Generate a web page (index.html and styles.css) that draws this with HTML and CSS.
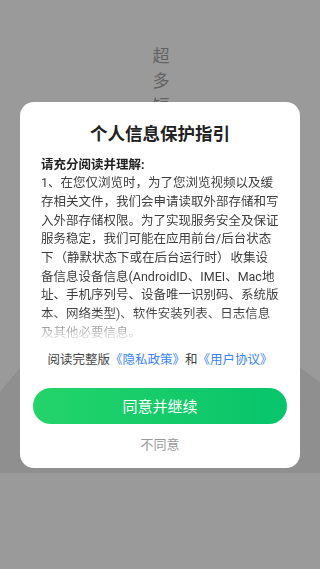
FILE: index.html
```html
<!doctype html>
<html lang="zh-CN">
<head>
	<meta charset="UTF-8">
	<meta name="viewport" content="width=device-width, initial-scale=1.0">
	<title>个人信息保护指引</title>
	<link rel="stylesheet" href="styles.css">
</head>
<body>
	<div class="page">
		<div class="hill"></div>
		<div class="slogan">超多短剧免费看</div>
	</div>

	<div class="mask">
		<div class="dialog">
			<h2 class="dialog-title">个人信息保护指引</h2>
			<div class="dialog-body">
				<p class="lead">请充分阅读并理解:</p>
				<p>1、在您仅浏览时，为了您浏览视频以及缓存相关文件，我们会申请读取外部存储和写入外部存储权限。为了实现服务安全及保证服务稳定，我们可能在应用前台/后台状态下<span class="paren">（静默状态下或在后台运行时）</span>收集设备信息设备信息(AndroidID、IMEI、Mac地址、手机序列号、设备唯一识别码、系统版本、网络类型)、软件安装列表、日志信息及其他必要信息。</p>
				<p>2、我们会根据您的授权，收集您的位置信息，用于为您推荐更合适的内容。</p>
			</div>
			<p class="links">阅读完整版<a href="#">《隐私政策》</a>和<a href="#">《用户协议》</a></p>
			<button class="btn-agree">同意并继续</button>
			<button class="btn-refuse">不同意</button>
		</div>
	</div>
</body>
</html>
```

FILE: styles.css
```css
* {
	margin: 0;
	padding: 0;
	box-sizing: border-box;
}
html, body {
	height: 100%;
}
body {
	font-family: Roboto, "Noto Sans CJK SC", sans-serif;
	background-color: #9a9a9a;
	overflow: hidden;
}

/* 底层页面（被遮罩盖住） */
.page {
	position: relative;
	height: 569px;
}
.hill {
	position: absolute;
	left: 0;
	top: 0;
	width: 100%;
	height: 473px;
	background-color: #8f8f8f;
	clip-path: polygon(0 392px, 126px 240px, 100% 382px, 100% 100%, 0 100%);
}
.slogan {
	position: absolute;
	left: 152px;
	top: 44px;
	width: 18px;
	font-size: 17px;
	line-height: 25px;
	color: #636363;
	text-align: center;
}

/* 弹窗 */
.mask {
	position: fixed;
	left: 0;
	top: 0;
	width: 100%;
	height: 100%;
	display: flex;
	align-items: center;
	justify-content: center;
}
.dialog {
	width: 280px;
	background-color: #fff;
	border-radius: 14px;
	padding: 19px 0 14px;
	display: flex;
	flex-direction: column;
	align-items: center;
}
.dialog-title {
	font-size: 17.5px;
	line-height: 26px;
	font-weight: bold;
	color: #222;
}
.dialog-body {
	width: 238px;
	height: 187px;
	margin-top: 9px;
	overflow: hidden;
	font-size: 12.5px;
	line-height: 18.7px;
	color: #3d3d3d;
	-webkit-mask-image: linear-gradient(to bottom, #000 calc(100% - 32px), transparent 100%);
	mask-image: linear-gradient(to bottom, #000 calc(100% - 32px), transparent 100%);
}
.lead {
	font-weight: bold;
	color: #222;
}
/* 全角括号在原图里略宽 */
.paren {
	padding: 0 1px;
}
.links {
	margin-top: 7px;
	font-size: 12.5px;
	line-height: 19px;
	color: #444;
}
.links a {
	color: #3a82f6;
	text-decoration: none;
}
.btn-agree {
	margin-top: 19px;
	width: 254px;
	height: 36px;
	border: none;
	border-radius: 18px;
	background: linear-gradient(to right, #24d469, #07c46b);
	color: #fff;
	font-family: inherit;
	font-size: 15px;
}
.btn-refuse {
	margin-top: 11px;
	border: none;
	background: none;
	font-family: inherit;
	font-size: 13px;
	line-height: 19px;
	color: #999;
}
```
